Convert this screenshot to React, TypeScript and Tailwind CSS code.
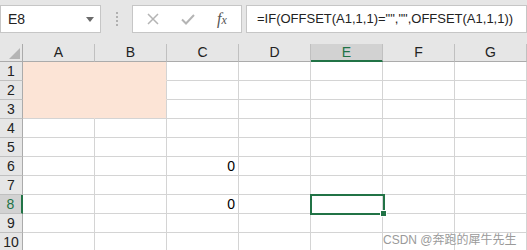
const cols = ["A", "B", "C", "D", "E", "F", "G"]
const rows = [1, 2, 3, 4, 5, 6, 7, 8, 9, 10]

function Cell({ r, c }: { r: number; c: string }) {
  const peach = r <= 3 && (c === "A" || c === "B")
  const value = c === "C" && (r === 6 || r === 8) ? "0" : ""
  const selected = r === 8 && c === "E"
  return (
    <div
      className={`relative h-[19px] border-b border-r flex items-center justify-end pr-[3px] text-[14px] text-black ${
        peach ? "bg-[#fce4d6] border-[#fce4d6]" : "bg-white border-[#d4d4d4]"
      } ${peach && c === "B" ? "border-r-[#d4d4d4]" : ""} ${peach && r === 3 ? "border-b-[#d4d4d4]" : ""}`}
    >
      {value}
      {selected && (
        <div className="absolute z-10 -left-[1px] -top-[1px] w-[75px] h-[21px] border-2 border-[#217346]">
          <div className="absolute -right-[4px] -bottom-[4px] w-[7px] h-[7px] bg-[#217346] border border-white" />
        </div>
      )}
    </div>
  )
}

export default function App() {
  return (
    <div className="relative w-[527px] h-[250px] overflow-hidden bg-white" style={{ fontFamily: '"Liberation Sans", Arial, sans-serif' }}>
      {/* formula bar */}
      <div className="h-[44px] bg-[#e6e6e6] flex items-start pt-[5px]">
        <div className="shrink-0 w-[101px] h-[28px] bg-white border border-[#c6c6c6] flex items-center justify-between pl-[7px] pr-[6px]">
          <span className="text-[14px] text-[#222]">E8</span>
          <svg width="8" height="5" viewBox="0 0 8 5">
            <path d="M0 0 L8 0 L4 5 Z" fill="#6b6b6b" />
          </svg>
        </div>
        <div className="shrink-0 w-[31px] h-[28px] flex flex-col items-center justify-center gap-[2px]">
          <span className="w-[2px] h-[2px] bg-[#b0b0b0]" />
          <span className="w-[2px] h-[2px] bg-[#b0b0b0]" />
          <span className="w-[2px] h-[2px] bg-[#b0b0b0]" />
          <span className="w-[2px] h-[2px] bg-[#b0b0b0]" />
        </div>
        <div className="shrink-0 w-[110px] h-[28px] bg-white border border-[#c6c6c6] flex items-center pl-[14px]">
          <svg width="12" height="12" viewBox="0 0 12 12" className="mr-[22px]">
            <path d="M1 1 L11 11 M11 1 L1 11" stroke="#b4b4b4" strokeWidth="1.5" />
          </svg>
          <svg width="14" height="11" viewBox="0 0 14 11" className="mr-[22px]">
            <path d="M1 5.5 L5 9.5 L13 1" stroke="#b4b4b4" strokeWidth="2" fill="none" />
          </svg>
          <span className="text-[16px] italic text-[#555] leading-none" style={{ fontFamily: '"Liberation Serif", serif' }}>
            f<span className="text-[12px]">x</span>
          </span>
        </div>
        <div className="ml-[4px] flex-1 min-w-0 h-[28px] bg-white border border-[#c6c6c6] flex items-center pl-[10px] overflow-hidden">
          <span className="text-[13px] text-[#222] whitespace-nowrap">=IF(OFFSET(A1,1,1)="","",OFFSET(A1,1,1))</span>
        </div>
      </div>

      {/* sheet grid */}
      <div className="grid grid-cols-[23px_repeat(7,72px)]">
        <div className="relative h-[18px] bg-[#e6e6e6] border-r border-b border-[#ababab]">
          <svg width="11" height="11" viewBox="0 0 11 11" className="absolute right-[2px] bottom-[2px]">
            <path d="M11 0 L11 11 L0 11 Z" fill="#b4b4b4" />
          </svg>
        </div>
        {cols.map((c) => (
          <div
            key={c}
            className={`h-[18px] flex items-center justify-center text-[14px] text-[#222] border-r border-r-[#c0c0c0] ${
              c === "E" ? "bg-[#d2d2d2] border-b-2 border-b-[#217346] text-[#217346]" : "bg-[#e6e6e6] border-b border-b-[#ababab]"
            }`}
          >
            {c}
          </div>
        ))}
        {rows.map((r) => (
          <Row key={r} r={r} />
        ))}
      </div>

      <div className="absolute z-20 left-[383px] top-[231px] text-[12px] text-[#9a9a9a] whitespace-nowrap" style={{ fontFamily: '"Liberation Sans", "Noto Sans CJK SC", sans-serif' }}>
        CSDN @奔跑的犀牛先生
      </div>
    </div>
  )
}

function Row({ r }: { r: number }) {
  const sel = r === 8
  return (
    <>
      <div
        className={`h-[19px] flex items-center justify-center text-[14px] text-[#222] border-b border-b-[#c0c0c0] ${
          sel ? "bg-[#d2d2d2] border-r-2 border-r-[#217346] text-[#217346]" : "bg-[#e6e6e6] border-r border-r-[#ababab]"
        }`}
      >
        {r}
      </div>
      {cols.map((c) => (
        <Cell key={c} r={r} c={c} />
      ))}
    </>
  )
}
